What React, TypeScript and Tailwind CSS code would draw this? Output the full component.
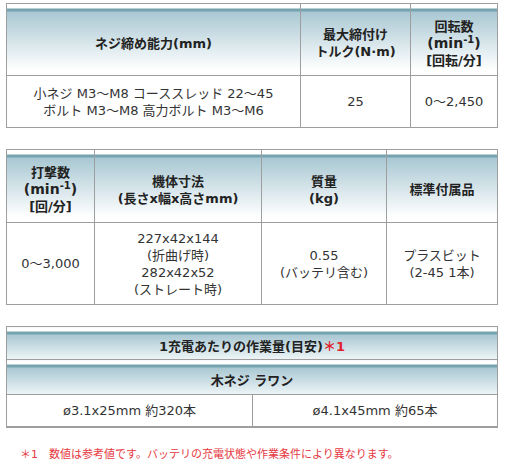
import React from 'react';

const headBg =
  'bg-[linear-gradient(to_bottom,#ffffff_0px,#ffffff_4px,#76a3b0_4px,#76a3b0_7px,#a8c7d2_7px,#ffffff_92%)]';
const headBgShort =
  'bg-[linear-gradient(to_bottom,#ffffff_0px,#ffffff_4px,#76a3b0_4px,#76a3b0_7px,#a8c7d2_7px,#eef5f7_100%)]';

const th = `border border-[#9e9e9e] ${headBg} text-center align-middle font-bold text-[#222] pt-[7px]`;
const td = 'border border-[#9e9e9e] bg-white text-center align-middle text-[#333]';

function Min() {
  return (
    <span className="text-[14px]">
      (min<sup className="text-[10px] leading-none">-1</sup>)
    </span>
  );
}

export default function App() {
  return (
    <div className="w-[508px] h-[469px] bg-white pt-[3px] pl-[6px] font-['DejaVu_Sans','Noto_Sans_CJK_JP',sans-serif] text-[13px] leading-[17px]">
      {/* 仕様 1 */}
      <table className="w-[492px] border-collapse table-fixed">
        <colgroup>
          <col className="w-[294px]" />
          <col className="w-[110px]" />
          <col />
        </colgroup>
        <thead>
          <tr className="h-[72px]">
            <th className={th}>ネジ締め能力(mm)</th>
            <th className={th}>
              最大締付け
              <br />
              トルク(N·m)
            </th>
            <th className={th}>
              回転数
              <br />
              <Min />
              <br />
              [回転/分]
            </th>
          </tr>
        </thead>
        <tbody>
          <tr className="h-[52px]">
            <td className={td}>
              小ネジ M3～M8 コーススレッド 22～45
              <br />
              ボルト M3～M8 高力ボルト M3～M6
            </td>
            <td className={td}>25</td>
            <td className={td}>0～2,450</td>
          </tr>
        </tbody>
      </table>

      {/* 仕様 2 */}
      <table className="w-[492px] border-collapse table-fixed mt-[21px]">
        <colgroup>
          <col className="w-[88px]" />
          <col className="w-[167px]" />
          <col className="w-[125px]" />
          <col />
        </colgroup>
        <thead>
          <tr className="h-[73px]">
            <th className={th}>
              打撃数
              <br />
              <Min />
              <br />
              [回/分]
            </th>
            <th className={th}>
              機体寸法
              <br />
              (長さx幅x高さmm)
            </th>
            <th className={th}>
              質量
              <br />
              (kg)
            </th>
            <th className={th}>標準付属品</th>
          </tr>
        </thead>
        <tbody>
          <tr className="h-[82px]">
            <td className={td}>0～3,000</td>
            <td className={td}>
              227x42x144
              <br />
              (折曲げ時)
              <br />
              282x42x52
              <br />
              (ストレート時)
            </td>
            <td className={td}>
              0.55
              <br />
              (バッテリ含む)
            </td>
            <td className={td}>
              プラスビット
              <br />
              (2-45 1本)
            </td>
          </tr>
        </tbody>
      </table>

      {/* 作業量 */}
      <table className="w-[492px] border-collapse table-fixed mt-[21px] border-b-2 border-[#9e9e9e]">
        <colgroup>
          <col className="w-[246px]" />
          <col />
        </colgroup>
        <thead>
          <tr className="h-[33px]">
            <th colSpan={2} className={`border border-[#9e9e9e] ${headBgShort} text-center font-bold text-[#222] pt-[7px]`}>
              1充電あたりの作業量(目安)<span className="text-[#e0202a]">＊1</span>
            </th>
          </tr>
          <tr className="h-[35px]">
            <th colSpan={2} className={`border border-[#9e9e9e] ${headBgShort} text-center font-bold text-[#222] pt-[7px]`}>
              木ネジ ラワン
            </th>
          </tr>
        </thead>
        <tbody>
          <tr className="h-[32px]">
            <td className={td}>ø3.1x25mm 約320本</td>
            <td className={td}>ø4.1x45mm 約65本</td>
          </tr>
        </tbody>
      </table>

      <p className="mt-[18px] pl-[14px] text-[11px] text-[#e5393f]">＊1　数値は参考値です。バッテリの充電状態や作業条件により異なります。</p>
    </div>
  );
}
